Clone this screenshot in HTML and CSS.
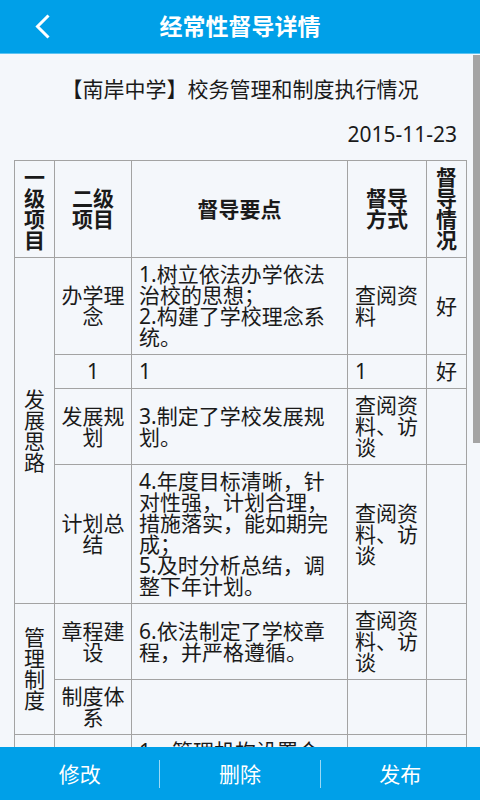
FILE: index.html
```html
<!DOCTYPE html>
<html lang="zh-CN">
<head>
    <meta charset="UTF-8">
    <meta name="viewport" content="width=device-width, initial-scale=1.0">
    <title>经常性督导详情</title>
    <link rel="stylesheet" href="styles.css">
</head>
<body>

    <header class="topbar">
        <a class="back-btn" href="#">
            <svg width="16" height="26" viewBox="0 0 16 26">
                <path d="M13.5 1.5 L2.5 12.5 L13.5 23.5" stroke="#fff" stroke-width="3" fill="none"/>
            </svg>
        </a>
        <h1>经常性督导详情</h1>
        <span></span>
    </header>

    <div class="content">
        <p class="doc-title">【南岸中学】校务管理和制度执行情况</p>
        <p class="doc-date">2015-11-23</p>

        <table class="detail-table">
            <colgroup>
                <col class="col-lv1">
                <col class="col-lv2">
                <col class="col-point">
                <col class="col-way">
                <col class="col-result">
            </colgroup>
            <thead>
                <tr>
                    <th>一级项目</th>
                    <th class="lv2">二级<br>项目</th>
                    <th>督导要点</th>
                    <th>督导<br>方式</th>
                    <th>督导情况</th>
                </tr>
            </thead>
            <tbody>
                <tr>
                    <td class="center" rowspan="4">发展思路</td>
                    <td class="lv2">办学理念</td>
                    <td>1.树立依法办学依法治校的思想；<br>2.构建了学校理念系统。</td>
                    <td>查阅资料</td>
                    <td class="center">好</td>
                </tr>
                <tr>
                    <td class="lv2">1</td>
                    <td>1</td>
                    <td>1</td>
                    <td class="center">好</td>
                </tr>
                <tr>
                    <td class="lv2">发展规划</td>
                    <td>3.制定了学校发展规划。</td>
                    <td>查阅资料、访谈</td>
                    <td></td>
                </tr>
                <tr>
                    <td class="lv2">计划总结</td>
                    <td>4.年度目标清晰，针对性强，计划合理，措施落实，能如期完成；<br>5.及时分析总结，调整下年计划。</td>
                    <td>查阅资料、访谈</td>
                    <td></td>
                </tr>
                <tr>
                    <td class="center" rowspan="2">管理制度</td>
                    <td class="lv2">章程建设</td>
                    <td>6.依法制定了学校章程，并严格遵循。</td>
                    <td>查阅资料、访谈</td>
                    <td></td>
                </tr>
                <tr>
                    <td class="lv2">制度体系</td>
                    <td></td>
                    <td></td>
                    <td></td>
                </tr>
                <tr>
                    <td class="center">组织机构</td>
                    <td class="lv2">机构设置</td>
                    <td class="top">1、管理机构设置合，职责明确，分工具体，运转高效；<br>2、建立了校务公开制度。</td>
                    <td>查阅资料</td>
                    <td></td>
                </tr>
            </tbody>
        </table>
    </div>

    <!-- scroll indicator drawn over the page -->
    <div class="scroll-thumb"></div>

    <footer class="actions">
        <button>修改</button>
        <button>删除</button>
        <button>发布</button>
    </footer>

</body>
</html>
```

FILE: styles.css
```css
html, body {
    height: 100%;
    overflow: hidden;
}
body {
    margin: 0;
    background: #f4f7fb;
    color: #1a1a1a;
    font-family: "Noto Sans", "Noto Sans CJK SC", sans-serif;
}
.topbar {
    display: grid;
    grid-template-columns: 80px 1fr 80px;
    align-items: center;
    height: 53px;
    background: #00a0e8;
    border-bottom: 1px solid #5cc3f2;
}
.back-btn {
    display: block;
    padding-left: 35px;
    height: 26px;
}
.topbar h1 {
    margin: 0;
    color: #fff;
    font-size: 23px;
    font-weight: bold;
    text-align: center;
    line-height: 30px;
    padding-bottom: 2px;
}
.content {
    padding: 21px 14px 0 14px;
}
.doc-title {
    margin: 0;
    font-size: 21px;
    line-height: 28px;
    text-align: center;
}
.doc-date {
    margin: 17px 0 0 0;
    padding-right: 9px;
    font-size: 21px;
    line-height: 28px;
    text-align: right;
}
.detail-table {
    margin-top: 12px;
    width: 452px;
    border-collapse: collapse;
    table-layout: fixed;
}
.col-lv1 { width: 40px; }
.col-lv2 { width: 77px; }
.col-point { width: 216px; }
.col-way { width: 79px; }
.col-result { width: 40px; }
.detail-table th,
.detail-table td {
    border: 1px solid #a3a3a3;
    padding: 6px 7px;
    font-size: 21px;
    line-height: 21px;
    vertical-align: middle;
    text-align: left;
    font-weight: normal;
}
.detail-table th {
    font-weight: bold;
    text-align: center;
}
.detail-table .lv2 {
    padding-left: 3px;
    padding-right: 3px;
    text-align: center;
}
.detail-table .center {
    text-align: center;
}
.detail-table .top {
    vertical-align: top;
}
.scroll-thumb {
    position: fixed;
    top: 55px;
    right: 0;
    width: 7px;
    height: 388px;
    background: #a4a4a4;
}
.actions {
    position: fixed;
    left: 0;
    right: 0;
    bottom: 0;
    height: 53px;
    display: flex;
    align-items: center;
    background: #00a0e8;
}
.actions button {
    flex: 1;
    height: 28px;
    padding: 0;
    border: none;
    background: transparent;
    color: #fff;
    font-family: "Noto Sans", "Noto Sans CJK SC", sans-serif;
    font-size: 21px;
    line-height: 28px;
    cursor: pointer;
}
.actions button + button {
    border-left: 1px solid rgba(255, 255, 255, 0.6);
}
```
